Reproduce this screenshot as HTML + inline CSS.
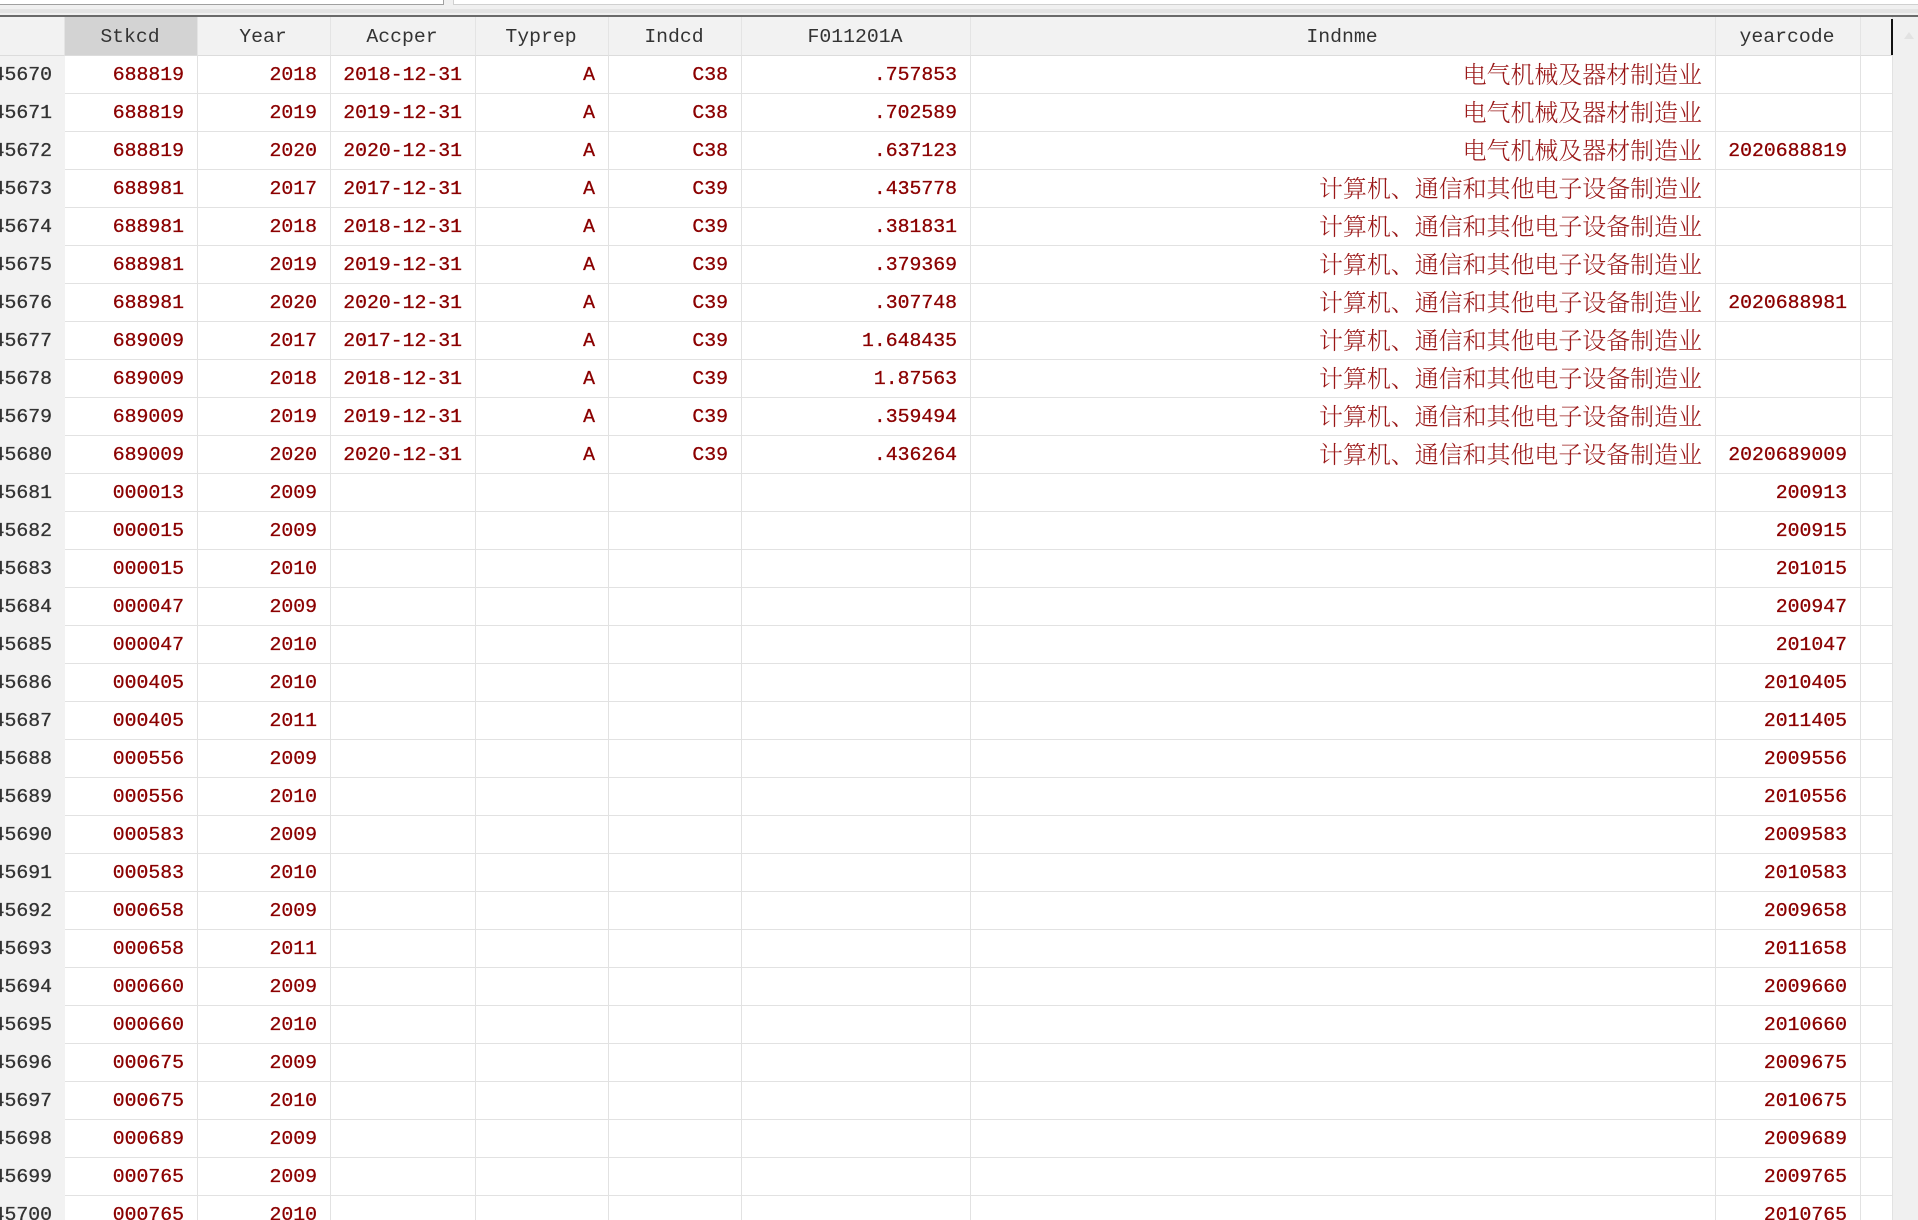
<!DOCTYPE html>
<html lang="zh">
<head>
<meta charset="utf-8">
<title>Data Editor</title>
<style>
html,body{margin:0;padding:0;width:1918px;height:1220px;overflow:hidden;background:#f0f0f0}
#wrap{position:absolute;left:0;top:0;width:1918px;height:1220px;overflow:hidden;background:#f0f0f0}
#top{position:absolute;left:0;top:0;width:1918px;height:16px;background:#f0f0f0}
#b1{position:absolute;left:0;top:0;width:443px;height:4px;background:#fff;border-bottom:1px solid #a0a0a0;border-right:1px solid #a0a0a0}
#b2{position:absolute;left:453px;top:0;width:1465px;height:4px;background:#fff;border-bottom:1px solid #d0d0d0;border-left:1px solid #d0d0d0}
#band{position:absolute;left:0;top:9px;width:1918px;height:4px;background:#e3e3e3}
#dark{position:absolute;left:0;top:15px;width:1918px;height:2px;background:#6a6a6a}
#gut{position:absolute;left:1893px;top:17px;width:25px;height:1203px;background:#f0f0f0}
#arrow{position:absolute;left:11px;top:15px;width:0;height:0;border-left:5px solid transparent;border-right:5px solid transparent;border-bottom:7px solid #e2e2e2}
#cursor{position:absolute;left:1891px;top:19px;width:2px;height:36px;background:#111}
table{position:absolute;left:0;top:17px;border-collapse:separate;border-spacing:0;table-layout:fixed;width:1893px;font-family:"Liberation Mono","DejaVu Sans Mono",monospace;font-size:19.8px;background:#fff}
th{height:39px;padding:1px 2px 0 0;background:#f2f2f2;color:#333;font-weight:400;text-align:center;border-right:1px solid #e4e4e4;border-bottom:1px solid #dcdcdc;box-sizing:border-box;line-height:26px}
th.s{background:#d3d3d3}
td{height:38px;padding:1px 13px 0 0;box-sizing:border-box;text-align:right;color:#8b0000;font-weight:400;-webkit-text-stroke:.3px #8b0000;border-right:1px solid #e2e2e2;border-bottom:1px solid #e2e2e2;white-space:nowrap;overflow:hidden;line-height:36px}
td.i{background:#f2f2f2;color:#333;-webkit-text-stroke:.3px #333;padding-right:13px;border-right:0;border-bottom:1px solid #f2f2f2;direction:rtl;text-align:right}
td.c{font-family:"Noto Serif CJK SC","Liberation Serif",serif;font-size:23.95px;color:#9a1818;-webkit-text-stroke:0;padding:0 13px 4px 0;line-height:30px;font-weight:300}
</style>
</head>
<body>
<div id="wrap">
<div id="top"><div id="b1"></div><div id="b2"></div><div id="band"></div></div>
<div id="dark"></div>
<div id="gut"><div id="arrow"></div></div>
<table>
<colgroup><col style="width:65px"><col style="width:133px"><col style="width:133px"><col style="width:145px"><col style="width:133px"><col style="width:133px"><col style="width:229px"><col style="width:745px"><col style="width:145px"><col style="width:32px"></colgroup>
<tr><th></th><th class="s">Stkcd</th><th>Year</th><th>Accper</th><th>Typrep</th><th>Indcd</th><th>F011201A</th><th>Indnme</th><th>yearcode</th><th></th></tr>
<tr><td class="i">45670</td><td>688819</td><td>2018</td><td>2018-12-31</td><td>A</td><td>C38</td><td>.757853</td><td class="c">电气机械及器材制造业</td><td></td><td></td></tr>
<tr><td class="i">45671</td><td>688819</td><td>2019</td><td>2019-12-31</td><td>A</td><td>C38</td><td>.702589</td><td class="c">电气机械及器材制造业</td><td></td><td></td></tr>
<tr><td class="i">45672</td><td>688819</td><td>2020</td><td>2020-12-31</td><td>A</td><td>C38</td><td>.637123</td><td class="c">电气机械及器材制造业</td><td>2020688819</td><td></td></tr>
<tr><td class="i">45673</td><td>688981</td><td>2017</td><td>2017-12-31</td><td>A</td><td>C39</td><td>.435778</td><td class="c">计算机、通信和其他电子设备制造业</td><td></td><td></td></tr>
<tr><td class="i">45674</td><td>688981</td><td>2018</td><td>2018-12-31</td><td>A</td><td>C39</td><td>.381831</td><td class="c">计算机、通信和其他电子设备制造业</td><td></td><td></td></tr>
<tr><td class="i">45675</td><td>688981</td><td>2019</td><td>2019-12-31</td><td>A</td><td>C39</td><td>.379369</td><td class="c">计算机、通信和其他电子设备制造业</td><td></td><td></td></tr>
<tr><td class="i">45676</td><td>688981</td><td>2020</td><td>2020-12-31</td><td>A</td><td>C39</td><td>.307748</td><td class="c">计算机、通信和其他电子设备制造业</td><td>2020688981</td><td></td></tr>
<tr><td class="i">45677</td><td>689009</td><td>2017</td><td>2017-12-31</td><td>A</td><td>C39</td><td>1.648435</td><td class="c">计算机、通信和其他电子设备制造业</td><td></td><td></td></tr>
<tr><td class="i">45678</td><td>689009</td><td>2018</td><td>2018-12-31</td><td>A</td><td>C39</td><td>1.87563</td><td class="c">计算机、通信和其他电子设备制造业</td><td></td><td></td></tr>
<tr><td class="i">45679</td><td>689009</td><td>2019</td><td>2019-12-31</td><td>A</td><td>C39</td><td>.359494</td><td class="c">计算机、通信和其他电子设备制造业</td><td></td><td></td></tr>
<tr><td class="i">45680</td><td>689009</td><td>2020</td><td>2020-12-31</td><td>A</td><td>C39</td><td>.436264</td><td class="c">计算机、通信和其他电子设备制造业</td><td>2020689009</td><td></td></tr>
<tr><td class="i">45681</td><td>000013</td><td>2009</td><td></td><td></td><td></td><td></td><td></td><td>200913</td><td></td></tr>
<tr><td class="i">45682</td><td>000015</td><td>2009</td><td></td><td></td><td></td><td></td><td></td><td>200915</td><td></td></tr>
<tr><td class="i">45683</td><td>000015</td><td>2010</td><td></td><td></td><td></td><td></td><td></td><td>201015</td><td></td></tr>
<tr><td class="i">45684</td><td>000047</td><td>2009</td><td></td><td></td><td></td><td></td><td></td><td>200947</td><td></td></tr>
<tr><td class="i">45685</td><td>000047</td><td>2010</td><td></td><td></td><td></td><td></td><td></td><td>201047</td><td></td></tr>
<tr><td class="i">45686</td><td>000405</td><td>2010</td><td></td><td></td><td></td><td></td><td></td><td>2010405</td><td></td></tr>
<tr><td class="i">45687</td><td>000405</td><td>2011</td><td></td><td></td><td></td><td></td><td></td><td>2011405</td><td></td></tr>
<tr><td class="i">45688</td><td>000556</td><td>2009</td><td></td><td></td><td></td><td></td><td></td><td>2009556</td><td></td></tr>
<tr><td class="i">45689</td><td>000556</td><td>2010</td><td></td><td></td><td></td><td></td><td></td><td>2010556</td><td></td></tr>
<tr><td class="i">45690</td><td>000583</td><td>2009</td><td></td><td></td><td></td><td></td><td></td><td>2009583</td><td></td></tr>
<tr><td class="i">45691</td><td>000583</td><td>2010</td><td></td><td></td><td></td><td></td><td></td><td>2010583</td><td></td></tr>
<tr><td class="i">45692</td><td>000658</td><td>2009</td><td></td><td></td><td></td><td></td><td></td><td>2009658</td><td></td></tr>
<tr><td class="i">45693</td><td>000658</td><td>2011</td><td></td><td></td><td></td><td></td><td></td><td>2011658</td><td></td></tr>
<tr><td class="i">45694</td><td>000660</td><td>2009</td><td></td><td></td><td></td><td></td><td></td><td>2009660</td><td></td></tr>
<tr><td class="i">45695</td><td>000660</td><td>2010</td><td></td><td></td><td></td><td></td><td></td><td>2010660</td><td></td></tr>
<tr><td class="i">45696</td><td>000675</td><td>2009</td><td></td><td></td><td></td><td></td><td></td><td>2009675</td><td></td></tr>
<tr><td class="i">45697</td><td>000675</td><td>2010</td><td></td><td></td><td></td><td></td><td></td><td>2010675</td><td></td></tr>
<tr><td class="i">45698</td><td>000689</td><td>2009</td><td></td><td></td><td></td><td></td><td></td><td>2009689</td><td></td></tr>
<tr><td class="i">45699</td><td>000765</td><td>2009</td><td></td><td></td><td></td><td></td><td></td><td>2009765</td><td></td></tr>
<tr><td class="i">45700</td><td>000765</td><td>2010</td><td></td><td></td><td></td><td></td><td></td><td>2010765</td><td></td></tr>
</table>
<div id="cursor"></div>
</div>
</body>
</html>
